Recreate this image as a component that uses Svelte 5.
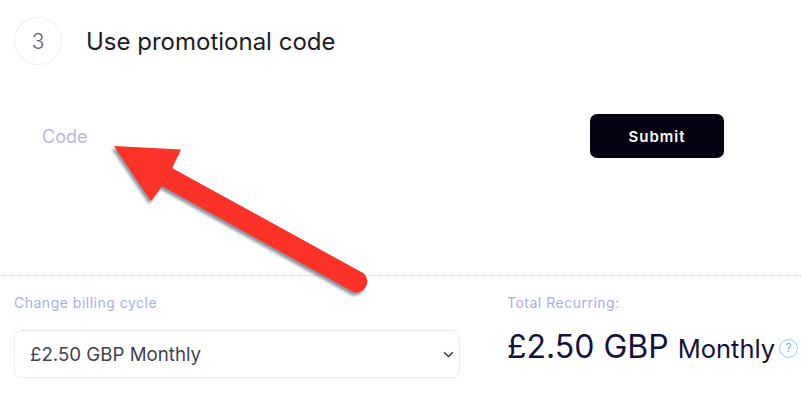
<script>
  const cycle = '£2.50 GBP Monthly';
</script>

<div class="page">
  <div class="step">
    <div class="step-num">3</div>
    <h2 class="step-title">Use promotional code</h2>
  </div>

  <div class="promo">
    <input class="promo-input" placeholder="Code" />
    <button class="submit">Submit</button>
  </div>

  <div class="billing">
    <div class="billing-left">
      <div class="label">Change billing cycle</div>
      <div class="select">
        <span>{cycle}</span>
        <svg class="chevron" viewBox="0 0 12 8" width="11" height="7">
          <path d="M1 1.500 6 6.200 11 1.500" fill="none" stroke="#33363f" stroke-width="1.700" />
        </svg>
      </div>
    </div>
    <div class="billing-right">
      <div class="label">Total Recurring:</div>
      <div class="total">
        <span class="amount">£2.50 GBP</span>
        <span class="period">Monthly</span>
        <span class="help">?</span>
      </div>
    </div>
  </div>

  <!-- annotation drawn over the screenshot -->
  <svg class="arrow" viewBox="0 0 801 407" width="801" height="407">
    <path
      d="M114 146 181 149.500 172 168 364 273.500a11 11 0 0 1 -10.500 18.500L162 186 151 201Z"
      fill="#fa3228"
    />
  </svg>
</div>

<style>
  :global(body) {
    margin: 0;
    background: #fff;
  }

  .page {
    position: relative;
    width: 801px;
    height: 407px;
    overflow: hidden;
    font-family: Inter, "Liberation Sans", sans-serif;
  }

  .step {
    display: flex;
    align-items: center;
    gap: 24px;
    padding: 17px 0 0 14px;
  }

  .step-num {
    width: 46px;
    height: 46px;
    border: 1px dotted #d8d9f8;
    border-radius: 50%;
    display: flex;
    align-items: center;
    justify-content: center;
    font-size: 21px;
    font-weight: 300;
    color: #5f6078;
  }

  .step-title {
    margin: 0;
    font-size: 24px;
    font-weight: 400;
    color: #1c1c24;
  }

  .promo {
    display: flex;
    align-items: center;
    justify-content: space-between;
    height: 44px;
    margin-top: 49px;
    padding: 0 77px 0 42px;
  }

  .promo-input {
    border: 0;
    outline: 0;
    padding: 0;
    width: 300px;
    font: inherit;
    font-size: 18px;
    background: transparent;
  }
  .promo-input::placeholder {
    color: #b5b7e0;
    opacity: 1;
  }

  .submit {
    width: 134px;
    height: 44px;
    border: 0;
    border-radius: 7px;
    background: #05030f;
    color: #fff;
    font: inherit;
    font-size: 15px;
    font-weight: 600;
    letter-spacing: 1px;
  }

  .billing {
    display: flex;
    margin-top: 117px;
    border-top: 1px dotted #c9d0f8;
    padding: 18px 0 0 14px;
  }

  .billing-left {
    width: 446px;
    margin-right: 47px;
  }

  .label {
    font-size: 14px;
    letter-spacing: 0.5px;
    color: #a8aeea;
  }

  .select {
    display: flex;
    align-items: center;
    justify-content: space-between;
    box-sizing: border-box;
    height: 48px;
    margin-top: 19px;
    padding: 0 5px 0 15px;
    border: 1px dotted #d3dcfb;
    border-radius: 7px;
    font-size: 18.7px;
    color: #3f4250;
  }

  .total {
    display: flex;
    align-items: baseline;
    margin-top: 16px;
    color: #14123a;
    white-space: nowrap;
  }

  .amount {
    font-size: 32px;
  }

  .period {
    margin-left: 9px;
    font-size: 25.5px;
  }

  .help {
    align-self: center;
    box-sizing: border-box;
    width: 19px;
    height: 19px;
    margin: 3px 0 0 4px;
    border: 1.500px solid #8ed2fa;
    border-radius: 50%;
    text-align: center;
    font-size: 12px;
    line-height: 16px;
    color: #5fb6ef;
  }

  .arrow {
    position: absolute;
    top: 0;
    left: 0;
    pointer-events: none;
    filter: drop-shadow(-2px 3px 1.5px rgba(70, 70, 90, 0.6));
  }
</style>
